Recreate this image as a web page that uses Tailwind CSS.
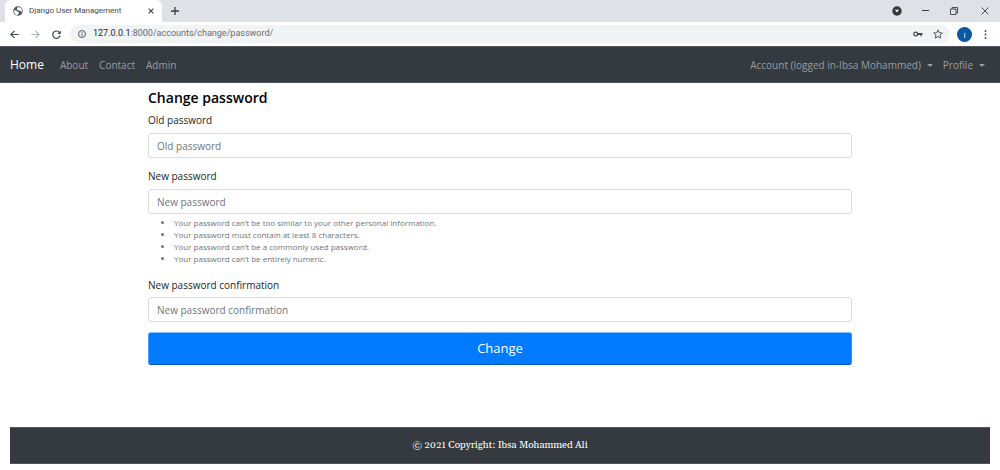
<!DOCTYPE html>
<html lang="en">
<head>
<meta charset="utf-8">
<meta name="viewport" content="width=device-width, initial-scale=1">
<title>Django User Management</title>
<script src="https://cdn.jsdelivr.net/npm/@tailwindcss/browser@4"></script>
</head>
<body class="flex min-h-screen flex-col bg-white font-['Segoe_UI','Open_Sans',sans-serif] text-[10px] text-[#212529]">

<!-- Browser chrome -->
<div class="bg-[#dee1e6]">
  <div class="flex h-[22px] items-center pl-[5px] pr-[11px] text-[#3c4043]">
    <div class="flex h-full w-[157px] items-center rounded-t-md bg-white pl-2 pr-2">
      <svg class="size-[10px] shrink-0" viewBox="0 0 20 20" aria-hidden="true"><circle cx="10" cy="10" r="9.5" fill="#50555a"/><path d="M2.5 8.5c2 .3 4.500.500 6.500 2.500s3 1 3 3-3 1.500-3 4C5 18 1.500 14 2.500 8.500ZM11 2c-2 1-3.500 2-2.500 3.500S6 8 8 8.500s3-.5 4.500.5 3 2 5.500 2c.5-5-2.500-8.500-7-9Z" fill="#fff"/></svg>
      <span class="ml-[6px] flex-1 whitespace-nowrap font-['Roboto',sans-serif] text-[8px] text-[#45494d]">Django User Management</span>
      <button type="button" aria-label="Close tab"><svg class="size-[6px]" viewBox="0 0 6 6" fill="none" stroke="currentColor" stroke-width="1.1"><path d="m.6.6 4.8 4.8m0-4.8L.6 5.4"/></svg></button>
    </div>
    <button type="button" aria-label="New tab" class="ml-[9px]"><svg class="size-2" viewBox="0 0 8 8" fill="none" stroke="currentColor" stroke-width="1.3"><path d="M4 0v8M0 4h8"/></svg></button>
    <div class="ml-auto flex items-center">
      <button type="button" aria-label="Search tabs" class="mr-5"><svg class="size-[10px]" viewBox="0 0 10 10"><circle cx="5" cy="5" r="4.7" fill="#35383c"/><path d="M2.9 3.8h4.2L5 6.500Z" fill="#fff"/></svg></button>
      <button type="button" aria-label="Minimize" class="mr-[21px]"><svg class="size-[7px]" viewBox="0 0 7 7" stroke="currentColor"><path d="M0 2.500h7"/></svg></button>
      <button type="button" aria-label="Restore" class="mr-[23px]"><svg class="size-2" viewBox="0 0 8 8" fill="none" stroke="currentColor" stroke-width=".9"><path d="M.5 2h5.500v5.500H.5ZM2 2V.5h5.500V6H6"/></svg></button>
      <button type="button" aria-label="Close window"><svg class="size-2" viewBox="0 0 8 8" fill="none" stroke="currentColor" stroke-width=".9"><path d="m.5.5 7 7m0-7-7 7"/></svg></button>
    </div>
  </div>
  <div class="flex h-6 items-center bg-white pl-[10px] pr-[13px] text-[#44484c]">
    <button type="button" aria-label="Back"><svg class="size-[9px]" viewBox="0 0 9 9" fill="none" stroke="currentColor" stroke-width="1.1"><path d="M8.700 4.500H.8M4.500.8.8 4.500l3.700 3.700"/></svg></button>
    <button type="button" aria-label="Forward" class="ml-3 text-[#b0b3b7]"><svg class="size-[9px]" viewBox="0 0 9 9" fill="none" stroke="currentColor" stroke-width="1.1"><path d="M.3 4.500h7.900M4.500.8l3.700 3.700-3.700 3.700"/></svg></button>
    <button type="button" aria-label="Reload" class="ml-3"><svg class="size-[9px]" viewBox="0 0 9 9" fill="none" stroke="currentColor" stroke-width="1.2"><path d="M7.600 2.700A3.700 3.700 0 1 0 8.100 5.500"/><path d="M8.800.4v3.500H5.300Z" fill="currentColor" stroke="none"/></svg></button>
    <div class="ml-[9px] flex h-[18px] flex-1 items-center rounded-full bg-[#f1f3f4] pl-2 pr-[7px]">
      <svg class="size-2 shrink-0" viewBox="0 0 8 8" fill="none" stroke="currentColor" stroke-width=".9" aria-hidden="true"><circle cx="4" cy="4" r="3.500"/><path d="M4 3.500v2.400M4 2v.9"/></svg>
      <span class="ml-[7px] flex-1 font-['Roboto',sans-serif] text-[9px] text-[#696d72]"><span class="text-[#25282c]">127.0.0.1</span>:8000/accounts/change/password/</span>
      <button type="button" aria-label="Saved passwords"><svg class="h-[6px] w-[10px]" viewBox="0 0 10 6" fill="none" stroke="currentColor" stroke-width="1.2"><circle cx="2.700" cy="3" r="1.900"/><path d="M4.500 2.600h5M4.500 3.500h4.800M8 3v2.200"/></svg></button>
      <button type="button" aria-label="Bookmark this page" class="ml-[10px]"><svg class="size-[10px]" viewBox="0 0 10 10" fill="none" stroke="currentColor" stroke-width=".9"><path d="m5 .9 1.200 2.800 3.100.3-2.300 2.100.7 3L5 7.500 2.300 9.100l.7-3L.7 4l3.100-.3Z"/></svg></button>
    </div>
    <button type="button" aria-label="User account" class="ml-[7px] size-[15px] rounded-full bg-[#0b57a0] text-[8px] leading-[15px] text-white">I</button>
    <button type="button" aria-label="Browser menu" class="ml-3"><svg class="h-[9px] w-[3px]" viewBox="0 0 3 9" fill="currentColor"><circle cx="1.500" cy="1" r=".9"/><circle cx="1.500" cy="4.500" r=".9"/><circle cx="1.500" cy="8" r=".9"/></svg></button>
  </div>
</div>

<nav class="flex h-[37px] items-center border-y border-[#50565c] bg-[#343a40] px-[10px] pt-px text-[#9a9da0]">
  <a href="#" class="text-[12px] text-white">Home</a>
  <div class="ml-4 flex gap-[11px]">
    <a href="#">About</a>
    <a href="#">Contact</a>
    <a href="#">Admin</a>
  </div>
  <div class="ml-auto flex gap-[10px] pr-[5px]">
    <button type="button" class="flex items-center gap-[6px]">Account (logged in-Ibsa Mohammed)<svg class="h-[3px] w-[6px]" viewBox="0 0 6 3" fill="currentColor" aria-hidden="true"><path d="M0 0h6L3 3Z"/></svg></button>
    <button type="button" class="flex items-center gap-[6px]">Profile<svg class="h-[3px] w-[6px]" viewBox="0 0 6 3" fill="currentColor" aria-hidden="true"><path d="M0 0h6L3 3Z"/></svg></button>
  </div>
</nav>

<main class="mx-auto w-full max-w-[704px]">
  <h1 class="mt-[5px] text-[14px] font-semibold leading-5 text-black">Change password</h1>
  <form>
    <div class="mt-1">
      <label for="old" class="block leading-4">Old password</label>
      <input id="old" type="password" placeholder="Old password" class="mt-[5px] block h-[25px] w-full rounded-[3px] border border-[#d9dde1] px-2 placeholder:text-[#6c757d]">
    </div>
    <div class="mt-[10px]">
      <label for="new" class="block leading-4">New password</label>
      <input id="new" type="password" placeholder="New password" aria-describedby="rules" class="mt-[5px] block h-[25px] w-full rounded-[3px] border border-[#d9dde1] px-2 placeholder:text-[#6c757d]">
      <ul id="rules" class="mt-[3px] list-disc pl-[26px] text-[8px] leading-[12px] text-[#6c757d]">
        <li>Your password can’t be too similar to your other personal information.</li>
        <li>Your password must contain at least 8 characters.</li>
        <li>Your password can’t be a commonly used password.</li>
        <li>Your password can’t be entirely numeric.</li>
      </ul>
    </div>
    <div class="mt-3">
      <label for="confirm" class="block leading-4">New password confirmation</label>
      <input id="confirm" type="password" placeholder="New password confirmation" class="mt-[4px] block h-[25px] w-full rounded-[3px] border border-[#d9dde1] px-2 placeholder:text-[#6c757d]">
    </div>
    <button type="submit" class="mt-[10px] block h-[33px] w-full rounded-[3px] border border-b-[#0058b8] border-l-[#4a9eff] border-r-[#4a8de0] border-t-[#80bbff] bg-[#007bff] text-[13px] text-white">Change</button>
  </form>
</main>

<footer class="mx-[10px] mb-[6px] mt-auto flex h-[37px] items-center justify-center border-y border-[#50565c] bg-[#343a40] font-[Georgia,Gelasio,'DejaVu_Serif',serif] text-[10px] text-white">© 2021 Copyright: Ibsa Mohammed Ali</footer>
</body>
</html>
